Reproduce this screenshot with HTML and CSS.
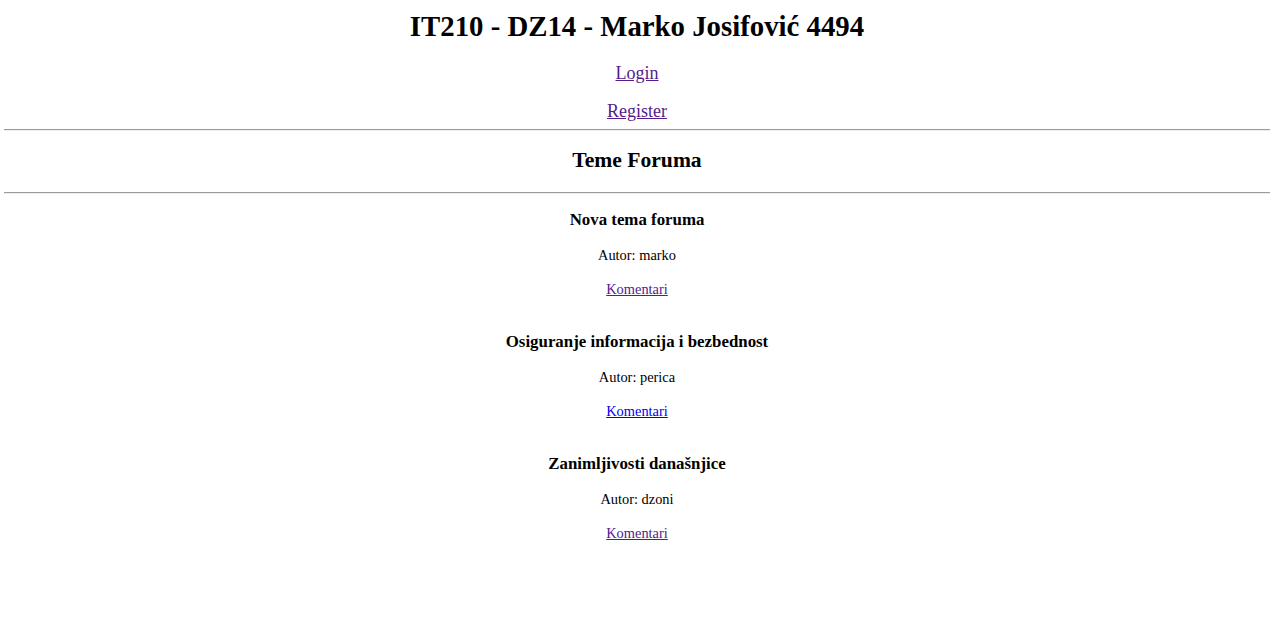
FILE: index.html
```html
<!DOCTYPE html>
<html lang="sr">
<head>
<meta charset="utf-8">
<title>IT210 - DZ14</title>
<link rel="stylesheet" href="styles.css">
</head>
<body>
<header class="site-header">
  <h1 class="site-title">IT210 - DZ14 - Marko Josifović 4494</h1>
  <p class="nav-item"><a class="link visited" href="#">Login</a></p>
  <p class="nav-item nav-item-second"><a class="link visited" href="#">Register</a></p>
</header>
<hr class="rule rule-top">
<h2 class="section-title">Teme Foruma</h2>
<hr class="rule rule-bottom">
<main class="topics">
  <section class="topic">
    <h3 class="topic-title">Nova tema foruma</h3>
    <p class="topic-line">Autor: marko</p>
    <p class="topic-line"><a class="link visited" href="#">Komentari</a></p>
  </section>
  <section class="topic">
    <h3 class="topic-title">Osiguranje informacija i bezbednost</h3>
    <p class="topic-line">Autor: perica</p>
    <p class="topic-line"><a class="link" href="#">Komentari</a></p>
  </section>
  <section class="topic">
    <h3 class="topic-title">Zanimljivosti današnjice</h3>
    <p class="topic-line">Autor: dzoni</p>
    <p class="topic-line"><a class="link visited" href="#">Komentari</a></p>
  </section>
</main>
</body>
</html>
```

FILE: styles.css
```css
html, body {
  background: #ffffff;
}

body {
  margin: 0;
  padding: 0 6px 0 4px;
  font-family: "Liberation Serif", "Times New Roman", serif;
  color: #000000;
  text-align: center;
}

.site-header {
  display: flow-root;
}

.site-title {
  margin: 9.5px 0 0;
  font-size: 28.8px;
  line-height: 33px;
  font-weight: bold;
}

.nav-item {
  margin: 20px 0 0;
  font-size: 18px;
  line-height: 21px;
}

.nav-item-second {
  margin-top: 17.5px;
}

.link {
  color: #0000ee;
  text-decoration: underline;
}

.link.visited {
  color: #551a8b;
}

.rule {
  display: block;
  height: 0;
  margin: 0;
  border: 0;
  border-top: 1px solid #9a9a9a;
  border-bottom: 1px solid #eeeeee;
}

.rule-top {
  margin-top: 6.5px;
}

.section-title {
  margin: 17.5px 0 0;
  font-size: 21.6px;
  line-height: 25px;
  font-weight: bold;
}

.rule-bottom {
  margin-top: 18.5px;
}

.topics {
  display: flex;
  flex-direction: column;
  gap: 34.5px;
  padding-top: 16.8px;
}

.topic {
  display: flex;
  flex-direction: column;
  gap: 17.3px;
}

.topic-title {
  margin: 0;
  font-size: 16.85px;
  line-height: 19px;
  font-weight: bold;
}

.topic-line {
  margin: 0;
  font-size: 14.4px;
  line-height: 17px;
}
```
